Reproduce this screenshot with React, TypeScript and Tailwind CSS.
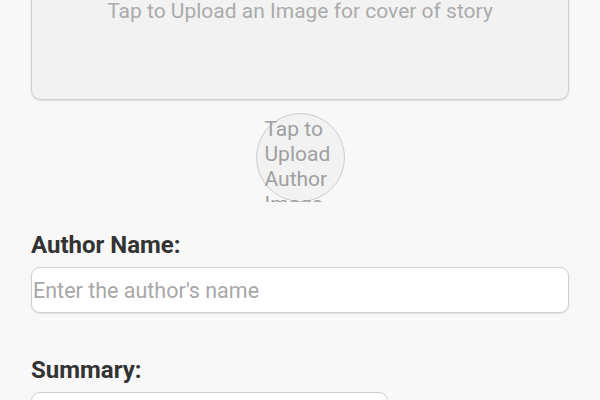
import React from "react";

export default function App() {
  return (
    <div
      className="w-[600px] h-[400px] overflow-hidden bg-[#f8f8f8] text-[#333]"
      style={{ fontFamily: "Roboto, 'Noto Sans', sans-serif" }}
    >
      <div className="px-[31px] flex flex-col">
        <div className="mt-[-76px] h-[176px] rounded-[10px] border border-[#cfcfcf] bg-[#f2f2f2] shadow-[0_1px_2px_rgba(0,0,0,0.12)] flex items-center justify-center">
          <span className="text-[21px] text-[#ababab]">Tap to Upload an Image for cover of story</span>
        </div>

        <div className="mt-[13px] self-center relative w-[89px] h-[89px]">
          <div className="absolute inset-0 rounded-full border border-[#cccccc] bg-[#f2f2f2]" />
          <div className="relative h-[89px] overflow-hidden pl-[9px] pr-[4px] pt-[4px] text-[21px] leading-[25px] text-[#a0a0a0]">
            Tap to Upload Author Image
          </div>
        </div>

        <div className="mt-[31px] text-[24px] font-bold leading-[24px] text-[#333]">Author Name:</div>
        <div className="mt-[10px] h-[46px] rounded-[9px] border border-[#d0d0d0] bg-white shadow-[0_1px_2px_rgba(0,0,0,0.1)] flex items-center">
          <span className="pt-[3px] pl-[1px] text-[21.5px] text-[#a8a8a8]">Enter the author's name</span>
        </div>

        <div className="mt-[45px] text-[24px] font-bold leading-[24px] text-[#333]">Summary:</div>
        <div className="mt-[10px] w-[357px] h-[46px] rounded-[9px] border border-[#d0d0d0] bg-white" />
      </div>
    </div>
  );
}
